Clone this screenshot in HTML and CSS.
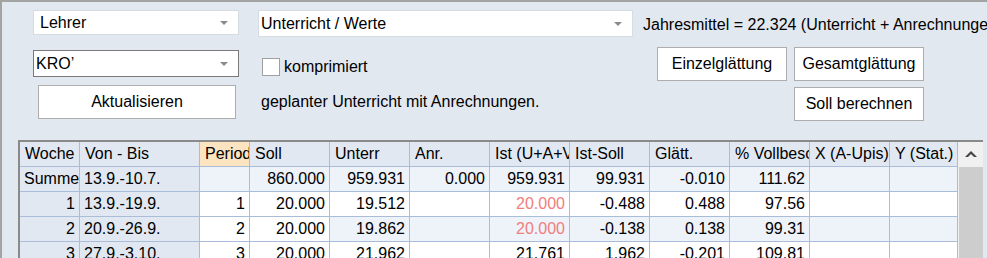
FILE: index.html
```html
<!DOCTYPE html>
<html lang="de">
<head>
  <meta charset="UTF-8">
  <title>Unterricht / Werte</title>
  <link rel="stylesheet" href="styles.css">
</head>
<body>
  <div class="frame">
    <div class="toolbar">
      <!-- left column: teacher selection -->
      <div class="col col-left">
        <div class="combo combo-light combo-lehrer">
          <span class="combo-text">Lehrer</span>
          <span class="arrow"></span>
        </div>
        <div class="combo combo-focus">
          <span class="combo-text">KRO’</span>
          <span class="arrow"></span>
        </div>
        <button class="btn btn-update">Aktualisieren</button>
      </div>

      <!-- middle column: view selection -->
      <div class="col col-mid">
        <div class="combo combo-light combo-view">
          <span class="combo-text">Unterricht / Werte</span>
          <span class="arrow"></span>
        </div>
        <label class="check"><span class="box"></span>komprimiert</label>
        <div class="note">geplanter Unterricht mit Anrechnungen.</div>
      </div>

      <!-- right column: summary + actions -->
      <div class="col col-right">
        <div class="summary">Jahresmittel = 22.324 (Unterricht + Anrechnungen)</div>
        <div class="actions">
          <button class="btn btn-action">Einzelglättung</button>
          <button class="btn btn-action">Gesamtglättung</button>
          <button class="btn btn-action btn-soll">Soll berechnen</button>
        </div>
      </div>
    </div>

    <div class="grid-wrap">
      <div class="grid">
        <div class="c hd">Woche</div>
        <div class="c hd">Von - Bis</div>
        <div class="c hd sel">Periode</div>
        <div class="c hd">Soll</div>
        <div class="c hd">Unterr</div>
        <div class="c hd">Anr.</div>
        <div class="c hd">Ist (U+A+V)</div>
        <div class="c hd">Ist-Soll</div>
        <div class="c hd">Glätt.</div>
        <div class="c hd">% Vollbeschäftigung</div>
        <div class="c hd">X (A-Upis)</div>
        <div class="c hd">Y (Stat.)</div>

        <div class="c fix">Summe</div>
        <div class="c fix">13.9.-10.7.</div>
        <div class="c alt num"></div>
        <div class="c alt num">860.000</div>
        <div class="c alt num">959.931</div>
        <div class="c alt num">0.000</div>
        <div class="c alt num">959.931</div>
        <div class="c alt num">99.931</div>
        <div class="c alt num">-0.010</div>
        <div class="c alt num">111.62</div>
        <div class="c alt"></div>
        <div class="c alt"></div>

        <div class="c fix num">1</div>
        <div class="c fix">13.9.-19.9.</div>
        <div class="c num">1</div>
        <div class="c num">20.000</div>
        <div class="c num">19.512</div>
        <div class="c num"></div>
        <div class="c num red">20.000</div>
        <div class="c num">-0.488</div>
        <div class="c num">0.488</div>
        <div class="c num">97.56</div>
        <div class="c"></div>
        <div class="c"></div>

        <div class="c fix num">2</div>
        <div class="c fix">20.9.-26.9.</div>
        <div class="c num">2</div>
        <div class="c num">20.000</div>
        <div class="c alt num">19.862</div>
        <div class="c alt num"></div>
        <div class="c alt num red">20.000</div>
        <div class="c alt num">-0.138</div>
        <div class="c alt num">0.138</div>
        <div class="c alt num">99.31</div>
        <div class="c alt"></div>
        <div class="c alt"></div>

        <div class="c fix num">3</div>
        <div class="c fix">27.9.-3.10.</div>
        <div class="c num">3</div>
        <div class="c num">20.000</div>
        <div class="c num">21.962</div>
        <div class="c num"></div>
        <div class="c num">21.761</div>
        <div class="c num">1.962</div>
        <div class="c num">-0.201</div>
        <div class="c num">109.81</div>
        <div class="c"></div>
        <div class="c"></div>
      </div>

      <div class="scrollbar">
        <!-- up chevron: dark triangle with a lighter one stacked on it -->
        <div class="scroll-up">
          <span class="tri tri-dark"></span>
          <span class="tri tri-light"></span>
        </div>
        <div class="thumb"></div>
      </div>
    </div>
  </div>
</body>
</html>
```

FILE: styles.css
```css
/* Page */
body {
  margin: 0;
  font-family: "Liberation Sans", Arial, sans-serif;
  font-size: 16px;
  color: #000;
  background-color: #e2e8f0;
}

.frame {
  width: 987px;
  height: 258px;
  box-sizing: border-box;
  border-top: 2px solid #a3a3a3;
  border-left: 2px solid #a3a3a3;
  background-color: #e2e8f0;
  overflow: hidden;
}

/* Top controls */
.toolbar {
  display: flex;
  height: 138px;
}

.col {
  display: flex;
  flex-direction: column;
}

.col-left {
  margin-left: 31px;
  width: 206px;
}

.col-mid {
  margin-left: 19px;
  width: 375px;
}

.col-right {
  margin-left: 10px;
  flex: 1;
  min-width: 0;
}

/* Combo boxes */
.combo {
  display: flex;
  align-items: center;
  justify-content: space-between;
  box-sizing: border-box;
  background-color: #ffffff;
}

.combo-light {
  border: 1px solid #d6dce4;
}

.combo-lehrer {
  margin-top: 8px;
  height: 25px;
  padding: 0 10px 0 6px;
}

.combo-focus {
  margin-top: 15px;
  height: 27px;
  border: 1px solid #7a7a7a;
  padding: 0 10px 0 2px;
}

.combo-view {
  margin-top: 8px;
  height: 27px;
  padding: 0 10px 0 2px;
}

.arrow {
  width: 0;
  height: 0;
  border-left: 4px solid transparent;
  border-right: 4px solid transparent;
  border-top: 4px solid #8c8c8c;
}

/* Buttons */
.btn {
  box-sizing: border-box;
  background-color: #ffffff;
  border: 1px solid #adadad;
  font-family: inherit;
  font-size: 16px;
  color: #000;
  padding: 0;
}

.btn-update {
  margin: 8px 0 0 5px;
  width: 198px;
  height: 34px;
}

.actions {
  display: grid;
  grid-template-columns: 130px 130px;
  column-gap: 7px;
  row-gap: 6px;
  margin: 13px 0 0 14px;
}

.btn-action {
  height: 34px;
}

.btn-soll {
  grid-column: 2;
}

/* Checkbox + texts */
.check {
  display: flex;
  align-items: center;
  margin: 21px 0 0 4px;
  height: 18px;
}

.box {
  width: 18px;
  height: 18px;
  box-sizing: border-box;
  border: 1px solid #a0a0a0;
  background-color: #ffffff;
  margin-right: 4px;
}

.note {
  margin: 17px 0 0 3px;
  line-height: 18px;
}

.summary {
  margin-top: 14px;
  line-height: 18px;
  white-space: nowrap;
}

/* Data grid */
.grid-wrap {
  display: flex;
  margin-left: 16px;
  width: 965px;
  box-sizing: border-box;
  border-top: 2px solid #8a8a8a;
  border-left: 2px solid #8a8a8a;
}

.grid {
  display: grid;
  grid-template-columns: 60px 120px 50px repeat(8, 80px) 68px;
  grid-auto-rows: 25px;
}

.c {
  box-sizing: border-box;
  border-right: 1px solid #a9bcd8;
  border-bottom: 1px solid #a9bcd8;
  background-color: #ffffff;
  line-height: 24px;
  padding: 0 4px 0 5px;
  white-space: nowrap;
  overflow: hidden;
}

.hd {
  background-color: #e2e8f1;
}

.sel {
  background-color: #fde4c0;
}

.fix {
  background-color: #e2e8f1;
  padding-left: 4px;
}

.alt {
  background-color: #eef2f9;
}

.num {
  text-align: right;
}

.red {
  color: #f27d7d;
}

/* Scrollbar */
.scrollbar {
  flex: 0 0 25px;
  display: flex;
  flex-direction: column;
  background-color: #f0f0f0;
}

.scroll-up {
  flex: 0 0 25px;
  box-sizing: border-box;
  padding-top: 9px;
  display: flex;
  flex-direction: column;
  align-items: center;
}

.tri {
  display: block;
  width: 0;
  height: 0;
  border-left: 6px solid transparent;
  border-right: 6px solid transparent;
  border-bottom: 6px solid #444444;
}

.tri-light {
  margin-top: -3px;
  border-bottom-color: #f0f0f0;
}

.thumb {
  flex: 1;
  background-color: #cdcdcd;
  margin-left: 1px;
}
```
